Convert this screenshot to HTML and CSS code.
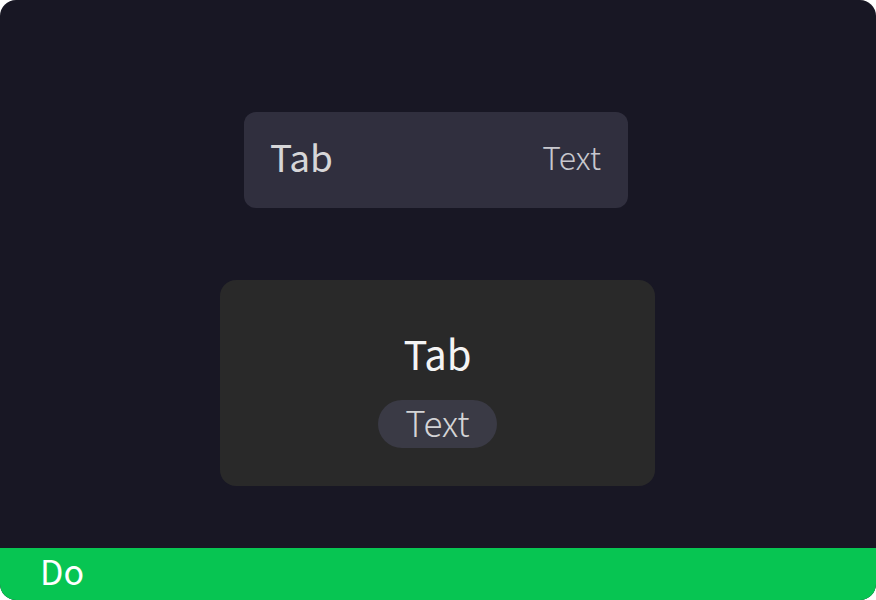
FILE: index.html
```html
<!DOCTYPE html>
<html>
<head>
<meta charset="utf-8">
<link rel="stylesheet" href="styles.css">
</head>
<body>
<div class="frame">
  <div class="stage">
    <div class="card-row">
      <span class="row-title">Tab</span>
      <span class="row-text">Text</span>
    </div>
    <div class="card-box">
      <span class="box-title">Tab</span>
      <span class="pill">Text</span>
    </div>
  </div>
  <div class="footer">Do</div>
</div>
</body>
</html>
```
FILE: styles.css
```css
html, body {
  margin: 0;
  padding: 0;
  background: #ffffff;
}
.frame {
  width: 876px;
  height: 600px;
  border-radius: 16px;
  overflow: hidden;
  background: #181724;
  display: flex;
  flex-direction: column;
  font-family: "Noto Sans CJK KR", "Noto Sans", sans-serif;
}
.stage {
  flex: 1;
  display: flex;
  flex-direction: column;
  align-items: center;
  padding-top: 112px;
}
.card-row {
  width: 384px;
  height: 96px;
  margin-right: 4px;
  box-sizing: border-box;
  padding: 0 27px 8px 26px;
  background: #302f3e;
  border-radius: 12px;
  display: flex;
  align-items: center;
  justify-content: space-between;
}
.row-title {
  font-size: 37px;
  color: #d6d6d8;
  line-height: 1;
}
.row-text {
  font-size: 32px;
  font-weight: 300;
  color: #c8c8ce;
  line-height: 1;
}
.card-box {
  margin-top: 72px;
  margin-right: 1px;
  width: 435px;
  height: 206px;
  background: #292929;
  border-radius: 16px;
  display: flex;
  flex-direction: column;
  align-items: center;
  padding-top: 53px;
  box-sizing: border-box;
}
.box-title {
  font-size: 40px;
  color: #f4f4f4;
  line-height: 1;
}
.pill {
  margin-top: 27px;
  width: 119px;
  height: 48px;
  box-sizing: border-box;
  padding-bottom: 5px;
  border-radius: 24px;
  background: #3a3a45;
  color: #d4d4d6;
  font-size: 35px;
  font-weight: 300;
  display: flex;
  align-items: center;
  justify-content: center;
  line-height: 1;
}
.footer {
  height: 52px;
  box-sizing: border-box;
  padding: 0 0 8px 40px;
  background: #07c552;
  color: #ffffff;
  font-size: 34px;
  display: flex;
  align-items: center;
}
```
